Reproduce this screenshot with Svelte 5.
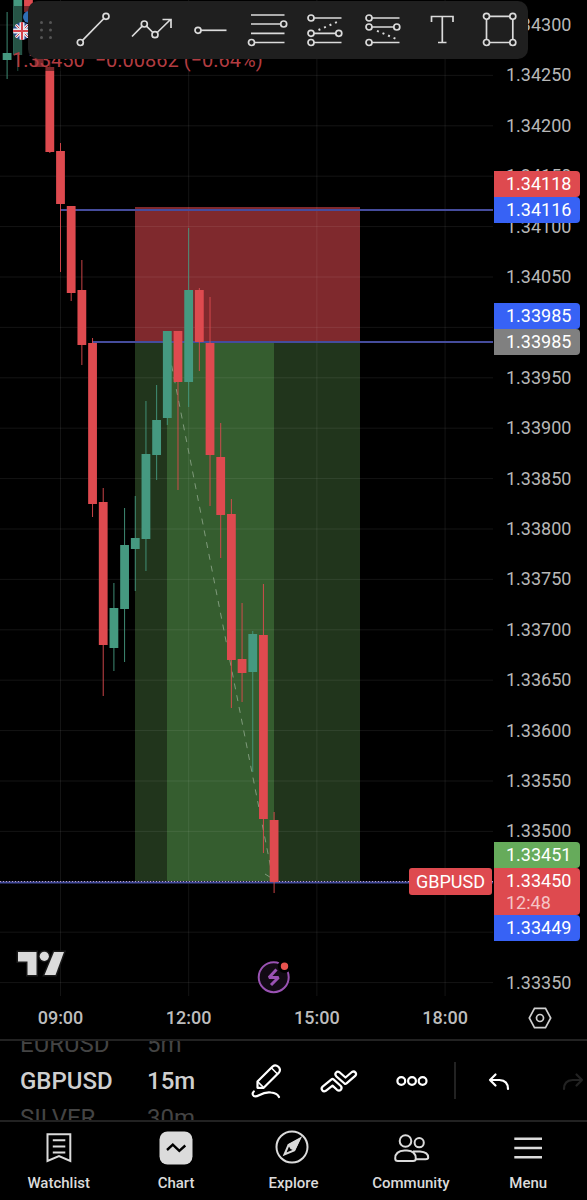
<script>
  const plotHeight = 1000;
  const topPrice = 1.343;
  const topOffset = 25;
  const step = 50.4;

  // Price labels every 0.00050
  const prices = Array.from({ length: 20 }, (_, i) => ({
    label: (topPrice - i * 0.0005).toFixed(5),
    y: topOffset + i * step
  }));

  // Labels that sit completely under a highlighted price are left out
  const covered = ['1.34000', '1.33450', '1.33400'];
  const scaleLabels = prices.filter((p) => !covered.includes(p.label));

  const times = ['09:00', '12:00', '15:00', '18:00'].map((label, i) => ({
    label,
    x: 60.5 + i * 128.2
  }));

  // 15 minute candles: [slot, body top, body bottom, wick top, wick bottom, direction]
  const candles = [
    [-5, 53, 60, 12, 79, 'up'],
    [-4, 0, 55, 0, 71, 'up'],
    [-3, 0, 12, 0, 30, 'down'],
    [-2, 12, 67, 8, 67, 'down'],
    [-1, 67, 152, 60, 153, 'down'],
    [0, 151, 204, 143, 272, 'down'],
    [1, 206, 293, 206, 301, 'down'],
    [2, 290, 345, 260, 365, 'down'],
    [3, 343, 504, 338, 517, 'down'],
    [4, 502, 645, 488, 696, 'down'],
    [5, 608, 648, 583, 671, 'up'],
    [6, 545, 609, 508, 662, 'up'],
    [7, 538, 549, 496, 591, 'up'],
    [8, 454, 539, 401, 571, 'up'],
    [9, 420, 455, 385, 480, 'up'],
    [10, 331, 418, 331, 425, 'up'],
    [11, 331, 382, 331, 490, 'down'],
    [12, 290, 382, 228, 407, 'up'],
    [13, 290, 342, 288, 371, 'down'],
    [14, 343, 455, 297, 506, 'down'],
    [15, 457, 515, 423, 558, 'down'],
    [16, 514, 660, 499, 708, 'down'],
    [17, 659, 673, 603, 702, 'down'],
    [18, 634, 672, 631, 772, 'up'],
    [19, 635, 819, 584, 853, 'down'],
    [20, 820, 882, 812, 893, 'down']
  ].map(([slot, top, bottom, high, low, dir]) => ({
    x: 60.5 + slot * 10.68,
    top,
    bottom,
    high,
    low,
    dir
  }));

  // Stacks of highlighted prices on the scale
  const tagGroups = [
    { y: 171, tags: [{ text: '1.34118', kind: 'red' }, { text: '1.34116', kind: 'blue' }] },
    { y: 303, tags: [{ text: '1.33985', kind: 'blue' }, { text: '1.33985', kind: 'gray' }] },
    {
      y: 842,
      tags: [
        { text: '1.33451', kind: 'green' },
        { text: '1.33450', kind: 'red', timer: '12:48' },
        { text: '1.33449', kind: 'blue' }
      ]
    }
  ];

  // Drawing tools: knobs are the little handles on each shape
  const tools = [
    { name: 'Trend line', path: 'M11.5 32.4L32.9 10.5', knobs: [[9.3, 34.5], [35, 8.3]] },
    {
      name: 'Path',
      path: 'M3 28.5L13.2 18.2M17.5 18.2L23.9 24.5M28.2 24.5L41.5 11.5M33.5 11.5H42V20',
      knobs: [[15.3, 16], [26, 26.7]]
    },
    { name: 'Horizontal ray', path: 'M14 22.3H39.5', knobs: [[11, 22.3]] },
    {
      name: 'Fib retracement',
      path: 'M6 7H39.5M6 16H35.7M6 25.3H39.5M9.5 34.5H39.5',
      knobs: [[38.7, 16], [6.5, 34.5]]
    },
    {
      name: 'Long position',
      path: 'M11 10H38.5M11 25.3H33M11 34.5H38.5',
      dots: 'M15.5 22L36.5 13',
      knobs: [[8, 10], [8, 25.3], [35.8, 25.3], [8, 34.5]]
    },
    {
      name: 'Short position',
      path: 'M11 10H38.5M11 19H33M11 34.5H38.5',
      dots: 'M16 22.8L36.5 31.5',
      knobs: [[8, 10], [8, 19], [35.8, 19], [8, 34.5]]
    },
    { name: 'Text', path: 'M12.5 14V8.5H34V14M23.3 8.5V34.5M19 34.5H27.5', knobs: [] },
    {
      name: 'Rectangle',
      path: 'M12.5 8.3H32.8M12.5 34.5H32.8M9.5 11.3V31.5M35.8 11.3V31.5',
      knobs: [[9.5, 8.3], [35.8, 8.3], [9.5, 34.5], [35.8, 34.5]]
    }
  ];

  const symbols = ['EURUSD', 'GBPUSD', 'SILVER'];
  const intervals = ['5m', '15m', '30m'];
  const tabs = ['Watchlist', 'Chart', 'Explore', 'Community', 'Menu'];

  let symbol = $state('GBPUSD');
  let interval = $state('15m');
  let activeTab = $state('Chart');
</script>

<main class="app">
  <section class="chart">
    <div class="pane">
      <svg class="plot" width="100%" height={plotHeight}>
        <rect class="stop" x="135" y="207" width="225" height="135" />
        <rect class="target" x="135" y="342" width="225" height="539" />
        <rect class="reached" x="167" y="342" width="107" height="539" />

        <g class="grid">
          {#each prices as p}
            <line x1="0" x2="100%" y1={p.y} y2={p.y} />
          {/each}
          {#each times as t}
            <line x1={t.x} x2={t.x} y1="0" y2="996" />
          {/each}
        </g>

        <path class="progress" d="M167 342L273 879" />
        <path class="progress-head" d="M265 874L273 879L274 870" />

        <g class="levels">
          <line x1="60" x2="100%" y1="210" y2="210" />
          <line x1="92" x2="100%" y1="342" y2="342" />
          <line x1="0" x2="100%" y1="882.5" y2="882.5" />
        </g>
        <line class="last" x1="0" x2="100%" y1="881.5" y2="881.5" />

        {#each candles as c}
          <g class={c.dir}>
            <rect class="wick" x={c.x - 0.5} y={c.high} width="1" height={c.low - c.high} />
            <rect x={c.x - 4.4} y={c.top} width="8.8" height={c.bottom - c.top} />
          </g>
        {/each}

        <rect class="legend-shade" x="14" y="6" width="270" height="65" />

        <!-- pair flags -->
        <circle cx="29" cy="17" r="6" fill="#2f6fb5" />
        <clipPath id="flag"><circle cx="22" cy="31" r="9" /></clipPath>
        <g clip-path="url(#flag)">
          <rect x="13" y="22" width="18" height="18" fill="#2a4b93" />
          <path d="M13 22L31 40M31 22L13 40" stroke="#e8e8ee" stroke-width="3" />
          <path d="M13 22L31 40M31 22L13 40" stroke="#c8404c" stroke-width="1" />
          <path d="M22 22V40M13 31H31" stroke="#e8e8ee" stroke-width="5" />
          <path d="M22 22V40M13 31H31" stroke="#d5434c" stroke-width="2" />
        </g>

        <!-- logo -->
        <g class="logo">
          <path d="M18 952H36.5V975H27.5V961.5H18Z" />
          <path d="M54 952H64L55.5 975H44.5Z" />
          <circle cx="44.3" cy="956.3" r="4.6" />
        </g>

        <!-- upcoming event -->
        <g class="event">
          <circle cx="273.7" cy="977.2" r="15" />
          <path class="bolt" d="M276.5 969.5L269 977.5H278.5L271 985" />
          <circle class="alert" cx="284.5" cy="966.3" r="5.2" />
        </g>
      </svg>

      <p class="quote">1.33450&nbsp; −0.00862 (−0.64%)</p>
      <span class="symbol-tag">GBPUSD</span>
    </div>

    <div class="scale">
      {#each scaleLabels as p}
        <span class="price" style:top="{p.y}px">{p.label}</span>
      {/each}
      {#each tagGroups as group}
        <div class="tags" style:top="{group.y}px">
          {#each group.tags as tag}
            <div class="tag {tag.kind}">
              {tag.text}
              {#if tag.timer}<small>{tag.timer}</small>{/if}
            </div>
          {/each}
        </div>
      {/each}
    </div>

    <div class="tools">
      <svg class="handle" width="36" height="44" aria-hidden="true">
        {#each [14.5, 22, 29.5] as y}
          <circle cx="13.5" cy={y} r="1.5" />
          <circle cx="22.5" cy={y} r="1.5" />
        {/each}
      </svg>
      {#each tools as tool}
        <button aria-label={tool.name}>
          <svg width="44" height="44" viewBox="0 0 44 44">
            <path d={tool.path} />
            {#if tool.dots}<path class="dots" d={tool.dots} />{/if}
            {#each tool.knobs as [x, y]}
              <circle cx={x} cy={y} r="3" />
            {/each}
          </svg>
        </button>
      {/each}
    </div>
  </section>

  <section class="time-axis">
    <div class="times">
      {#each times as t}
        <span style:left="{t.x}px">{t.label}</span>
      {/each}
    </div>
    <button aria-label="Chart settings">
      <svg width="24" height="24" viewBox="0 0 24 24">
        <path d="M6.5 2.3H17.5L22.7 12L17.5 21.7H6.5L1.3 12Z" />
        <circle cx="12" cy="12" r="3.5" />
      </svg>
    </button>
  </section>

  <section class="toolbar">
    <div class="wheels">
      <div class="wheel">
        {#each symbols as s}
          <button class:selected={s === symbol} onclick={() => (symbol = s)}>{s}</button>
        {/each}
      </div>
      <div class="wheel">
        {#each intervals as t}
          <button class:selected={t === interval} onclick={() => (interval = t)}>{t}</button>
        {/each}
      </div>
    </div>
    <button class="action" aria-label="Draw">
      <svg width="40" height="40" viewBox="0 0 40 40">
        <path d="M11.5 26.8V20.5L26.8 5.3Q29.5 3.2 32.4 5.8Q35.2 8.7 33 11.5L17.7 26.8Z" />
        <path d="M11.8 20.8L17.4 26.4M25.5 7L31.5 13" stroke-width="1.6" />
        <path d="M7.8 30.5Q6 32 7 34Q8.5 36.8 13 34.2Q19.5 30.7 25 31.5Q31 32 33 36" />
      </svg>
    </button>
    <button class="action" aria-label="Patterns">
      <svg width="40" height="40" viewBox="0 0 40 40">
        <path d="M3.6 25.6L12.5 18.4Q13.5 17.6 14.5 18.4L21.8 25Q23.4 27 21.8 28.8Q20 30.3 18 28.8L13.5 24.6L6.8 29.8Q4.7 31 3.2 29.2Q1.8 27.2 3.6 25.6Z" />
        <path d="M20.5 11.2Q18.5 10 16.9 11.7Q15.6 13.5 17.3 15.3L25.5 22.5Q26.5 23.2 27.5 22.4L36.2 14.9Q37.8 13.2 36.5 11.5Q35 9.8 32.9 11L26.5 16.5Z" />
      </svg>
    </button>
    <button class="action" aria-label="More">
      <svg width="40" height="40" viewBox="0 0 40 40">
        <circle cx="9.3" cy="20" r="3.9" />
        <circle cx="20" cy="20" r="3.9" />
        <circle cx="30.6" cy="20" r="3.9" />
      </svg>
    </button>
    <span class="divider"></span>
    <button class="action" aria-label="Undo">
      <svg width="40" height="40" viewBox="0 0 40 40">
        <path d="M16.5 13.5L11 19L16.5 24.5M11 19H20.5Q29 19.5 29 28" />
      </svg>
    </button>
    <button class="action" aria-label="Redo" disabled>
      <svg width="40" height="40" viewBox="0 0 40 40">
        <path d="M24.5 13.5L30 19L24.5 24.5M30 19H20.5Q12 19.5 12 28" />
      </svg>
    </button>
  </section>

  <nav>
    {#each tabs as tab}
      <button class:active={tab === activeTab} onclick={() => (activeTab = tab)}>
        <svg width="40" height="40" viewBox="0 0 40 40">
          {#if tab === 'Watchlist'}
            <path d="M8.5 6.3H31.3V33L20 28L8.5 33Z" />
            <path d="M13.8 12.3H26.3M13.8 18.5H26.3M13.8 24.5H26.3" />
          {:else if tab === 'Chart'}
            <rect class="solid" x="3.5" y="3.5" width="33" height="33" rx="8" />
            <path class="wave" d="M11 22L16.8 16.7L23.3 22.8L29.3 17.5" />
          {:else if tab === 'Explore'}
            <circle cx="19" cy="19" r="15.5" />
            <path d="M27 10.5L15.5 17L11.5 26.5L21 22.5Z" />
            <path class="solid" d="M28 9.5L14.8 16.5L17.5 21L22 23Z" />
          {:else if tab === 'Community'}
            <circle cx="14.5" cy="13" r="5.8" />
            <circle cx="28.2" cy="14.7" r="4.6" />
            <path d="M4.2 30.5Q4.2 22.8 13.5 22.5H16Q24.8 23 24.8 30.5Q24.8 33 22 33H7Q4.2 33 4.2 30.5Z" />
            <path d="M22 23.5H29Q37.2 24 37.2 29.5Q37.2 31.3 34.5 31.3H25" />
          {:else}
            <path class="thick" d="M6.3 10.7H34M6.3 20H34M6.3 29.3H34" />
          {/if}
        </svg>
        <span>{tab}</span>
      </button>
    {/each}
  </nav>
</main>

<style>
  :global(body) {
    background: #000;
  }

  .app {
    overflow: hidden;
    background: #000;
    color: #dbdbdb;
    font-family: Roboto, 'Liberation Sans', sans-serif;
  }

  button {
    padding: 0;
    border: none;
    background: none;
    color: inherit;
    font: inherit;
    cursor: pointer;
  }

  svg {
    display: block;
    fill: none;
  }

  .chart {
    position: relative;
    display: flex;
  }

  .pane {
    position: relative;
    flex: 1;
    overflow: hidden;
  }

  .grid line {
    stroke: rgba(255, 255, 255, 0.08);
  }

  .stop {
    fill: #7f292d;
  }

  .target {
    fill: #21351c;
  }

  .reached {
    fill: #355d2f;
  }

  .progress,
  .progress-head {
    stroke: #7f9a7b;
  }

  .progress {
    stroke-dasharray: 6 6;
  }

  .levels line {
    stroke: #454c9c;
    stroke-width: 2;
  }

  .last {
    stroke: #b9a0c8;
    stroke-dasharray: 1 2;
  }

  .up {
    fill: #459980;
  }

  .down {
    fill: #de4a4f;
  }

  .wick {
    opacity: 0.9;
  }

  .legend-shade {
    fill: rgba(0, 0, 0, 0.45);
  }

  .logo {
    fill: #dbdbdb;
    stroke: #1a1a1a;
    stroke-width: 3;
    paint-order: stroke;
  }

  .event {
    fill: #120a14;
    stroke: #9a52b3;
    stroke-width: 2;
  }

  .event .bolt {
    fill: none;
    stroke-width: 3;
    stroke-linejoin: bevel;
  }

  .event .alert {
    fill: #e8534f;
    stroke: #000;
    stroke-width: 3;
  }

  .quote {
    position: absolute;
    top: 48px;
    left: 12px;
    margin: 0;
    color: #b23c41;
    font-size: 20px;
    line-height: 24px;
    white-space: nowrap;
  }

  .symbol-tag {
    position: absolute;
    top: 868px;
    right: 1px;
    padding: 1px 7px 0;
    border-radius: 3px;
    background: #de4a4f;
    color: #fff;
    font-size: 18px;
    line-height: 26px;
  }

  .scale {
    position: relative;
    width: 94px;
    color: #b8b8b8;
    font-size: 18px;
  }

  .price {
    position: absolute;
    left: 13px;
    line-height: 24px;
    transform: translateY(-50%);
  }

  .tags {
    position: absolute;
    left: 1px;
    right: 7px;
  }

  .tag {
    padding-left: 12px;
    border-radius: 0 4px 4px 0;
    color: #fff;
    line-height: 26px;
  }

  .tag small {
    display: block;
    padding-bottom: 3px;
    color: #f5c4c6;
    font-size: 18px;
    line-height: 18px;
  }

  .red {
    background: #de4a4f;
  }

  .blue {
    background: #3762f5;
  }

  .gray {
    background: #808080;
  }

  .green {
    background: #66ab5b;
  }

  .tools {
    position: absolute;
    top: 1px;
    left: 28px;
    display: flex;
    align-items: center;
    height: 58px;
    border-radius: 10px;
    background: #1f1f1f;
  }

  .tools button {
    display: grid;
    place-items: center;
    width: 58px;
    height: 58px;
  }

  .tools button svg {
    stroke: #dbdbdb;
    stroke-width: 1.7;
  }

  .tools .dots {
    stroke-width: 2;
    stroke-dasharray: 2 4;
  }

  .handle {
    fill: #555;
  }

  .time-axis {
    display: flex;
    height: 39px;
    border-bottom: 2px solid #222;
  }

  .times {
    position: relative;
    flex: 1;
    color: #bdbdbd;
    font-size: 18px;
    font-weight: 500;
    line-height: 36px;
  }

  .times span {
    position: absolute;
    transform: translateX(-50%);
  }

  .time-axis button {
    display: grid;
    place-items: center;
    width: 94px;
    height: 36px;
  }

  .time-axis svg {
    stroke: #cfcfcf;
    stroke-width: 1.7;
  }

  .toolbar {
    display: flex;
    align-items: center;
    height: 79px;
    border-bottom: 2px solid #222;
  }

  .wheels {
    display: flex;
    flex: 1 0 209px;
    align-items: center;
    height: 100%;
    padding-left: 20px;
    overflow: hidden;
  }

  .wheel {
    display: flex;
    flex-direction: column;
    width: 127px;
  }

  .wheel:last-child {
    width: 82px;
  }

  .wheel button {
    height: 37px;
    color: #444;
    font-size: 24px;
    text-align: left;
  }

  .wheel .selected {
    color: #cfcfcf;
    font-weight: 500;
  }

  .action {
    display: grid;
    flex: none;
    place-items: center;
    width: 73px;
    height: 72px;
  }

  .action svg {
    stroke: #fff;
    stroke-width: 2.2;
    stroke-linejoin: round;
    stroke-linecap: round;
  }

  .action:disabled svg {
    stroke: #222;
  }

  .divider {
    flex: none;
    width: 2px;
    height: 37px;
    margin: 0 6px;
    background: #222;
  }

  nav {
    display: grid;
    grid-template-columns: repeat(5, 1fr);
    height: 78px;
  }

  nav button {
    display: flex;
    flex-direction: column;
    align-items: center;
    gap: 5px;
    padding-top: 6px;
    font-size: 15px;
    font-weight: 500;
    line-height: 20px;
  }

  nav svg {
    stroke: #dbdbdb;
    stroke-width: 2;
  }

  nav .solid {
    fill: #dbdbdb;
    stroke: none;
  }

  nav .wave {
    stroke: #000;
    stroke-width: 2.4;
  }

  nav .thick {
    stroke-width: 2.6;
  }
</style>
